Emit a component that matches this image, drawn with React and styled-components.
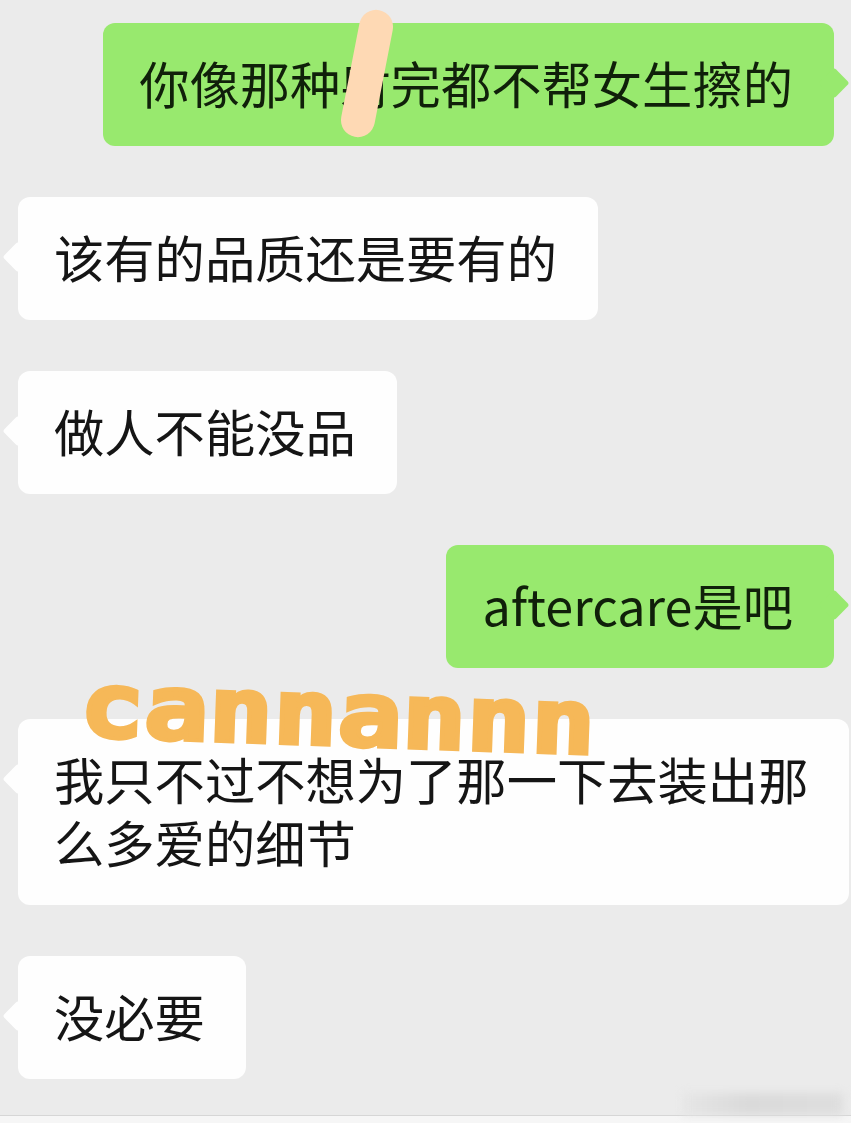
import React from 'react'
import styled, { createGlobalStyle } from 'styled-components'

const GlobalStyle = createGlobalStyle`
  html, body {
    margin: 0;
    padding: 0;
    background: #f6f6f6;
  }
`

const Page = styled.main`
  position: relative;
  width: 851px;
  height: 1123px;
  overflow: hidden;
  display: flex;
  flex-direction: column;
  font-family: "Noto Sans CJK SC", "Noto Sans", sans-serif;
`

const Thread = styled.section`
  flex: 1;
  display: flex;
  flex-direction: column;
  gap: 51px;
  padding: 23px 17px 0 18px;
  background: #ebebeb;
`

const Bubble = styled.div`
  position: relative;
  box-sizing: border-box;
  align-self: ${p => (p.$mine ? 'flex-end' : 'flex-start')};
  max-width: 831px;
  margin-right: ${p => (p.$mine ? '0' : '-15px')};
  padding: 28px ${p => (p.$wide ? '20px' : '41px')} 32px 36px;
  border-radius: 12px;
  background: ${p => (p.$mine ? '#98e96e' : '#fefefe')};
  color: ${p => (p.$mine ? '#10200a' : '#151515')};
  font-size: 50.3px;
  line-height: 63px;

  &::before {
    content: '';
    position: absolute;
    top: 49px;
    ${p => (p.$mine ? 'right: -11px;' : 'left: -11px;')}
    width: 22px;
    height: 22px;
    border-radius: 3px;
    background: inherit;
    transform: rotate(45deg);
  }
`

// peach marker stroke over the first message
const Scribble = styled.span`
  position: absolute;
  left: 350px;
  top: 9px;
  width: 34px;
  height: 129px;
  border-radius: 17px;
  background: #fed9b4;
  transform: rotate(11deg);
`

const Watermark = styled.div`
  position: absolute;
  left: 80px;
  top: 650px;
  color: #f6b858;
  font-family: "DejaVu Sans Mono", monospace;
  font-size: 90px;
  font-weight: 700;
  line-height: 110px;
  white-space: nowrap;
  -webkit-text-stroke: 4px #f6b858;
  transform: rotate(2deg) scaleX(1.19);
  transform-origin: left center;
`

const Footer = styled.footer`
  position: relative;
  height: 7px;
  background: #f6f6f6;
  border-top: 1px solid #d6d6d6;
`

// blurred-out caption sitting just above the bottom line
const Smudge = styled.span`
  position: absolute;
  right: 8px;
  bottom: 8px;
  width: 160px;
  height: 22px;
  background: linear-gradient(90deg, #e6e6e6, #dadada 40%, #dedede);
  filter: blur(4px);
`

const messages = [
  { id: 1, mine: true, text: '你像那种射完都不帮女生擦的' },
  { id: 2, text: '该有的品质还是要有的' },
  { id: 3, text: '做人不能没品' },
  { id: 4, mine: true, text: 'aftercare是吧' },
  { id: 5, wide: true, text: '我只不过不想为了那一下去装出那么多爱的细节' },
  { id: 6, text: '没必要' },
]

const App = () => (
  <Page>
    <GlobalStyle />
    <Thread>
      {messages.map(m => (
        <Bubble key={m.id} $mine={m.mine} $wide={m.wide}>{m.text}</Bubble>
      ))}
    </Thread>
    <Footer />
    <Smudge />
    <Scribble />
    <Watermark>cannannn</Watermark>
  </Page>
)

export default App
